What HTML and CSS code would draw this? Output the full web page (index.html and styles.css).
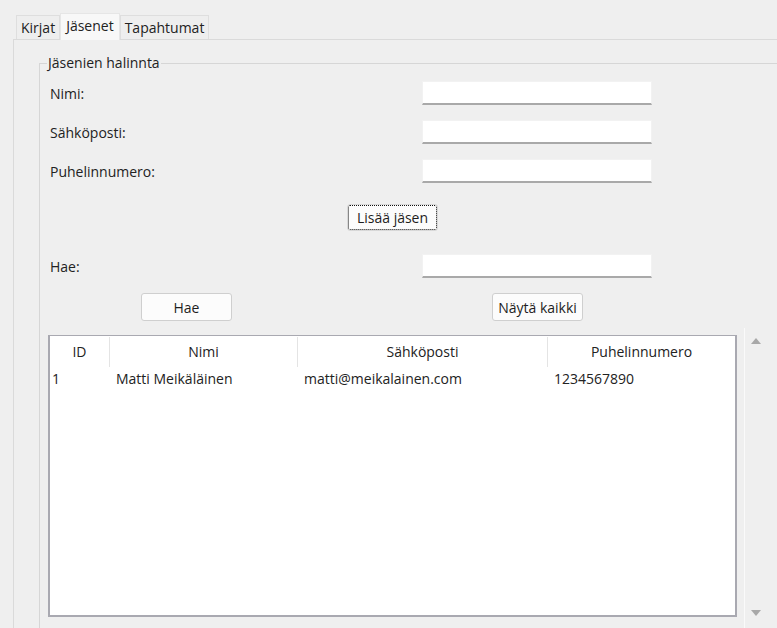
FILE: index.html
```html
<!DOCTYPE html>
<html lang="fi">
<head>
<meta charset="utf-8">
<title>Jäsenet</title>
<link rel="stylesheet" href="styles.css">
</head>
<body>
<div class="tabs">
  <div class="tab">Kirjat</div>
  <div class="tab active">Jäsenet</div>
  <div class="tab">Tapahtumat</div>
</div>
<div class="pane">
  <fieldset class="group">
    <legend>Jäsenien halinnta</legend>
    <div class="form-row"><span class="label">Nimi:</span><div class="input"></div></div>
    <div class="form-row"><span class="label">Sähköposti:</span><div class="input"></div></div>
    <div class="form-row"><span class="label">Puhelinnumero:</span><div class="input"></div></div>
    <div class="add-row"><button class="btn focus">Lisää jäsen</button></div>
    <div class="form-row search"><span class="label">Hae:</span><div class="input"></div></div>
    <div class="btn-row">
      <button class="btn hae">Hae</button>
      <button class="btn all">Näytä kaikki</button>
    </div>
    <div class="table-wrap">
      <div class="table">
        <div class="thead">
          <div class="th">ID</div>
          <div class="th">Nimi</div>
          <div class="th">Sähköposti</div>
          <div class="th last">Puhelinnumero</div>
        </div>
        <div class="tr">
          <div class="td id">1</div>
          <div class="td">Matti Meikäläinen</div>
          <div class="td">matti@meikalainen.com</div>
          <div class="td">1234567890</div>
        </div>
      </div>
      <div class="scrollbar">
        <span class="arrow up"></span>
        <span class="arrow down"></span>
      </div>
    </div>
  </fieldset>
</div>
</body>
</html>
```

FILE: styles.css
```css
html, body {
  margin: 0;
  height: 628px;
  overflow: hidden;
}
body {
  background: #efefef;
  font-family: "Open Sans", "Noto Sans", sans-serif;
  font-size: 14px;
  color: #222222;
}

/* tabs */
.tabs {
  display: flex;
  align-items: flex-end;
  padding: 13px 0 0 16px;
  height: 26px;
}
.tab {
  height: 24px;
  line-height: 24px;
  padding: 0 4px;
  border: 1px solid #dedede;
  border-bottom: none;
  background: #eeeeee;
  box-sizing: border-box;
}
.tab.active {
  height: 27px;
  line-height: 24px;
  padding: 0 5px;
  background: #f8f8f8;
  margin-bottom: -1px;
  position: relative;
  border-color: #e6e6e6;
}

.pane {
  margin-left: 13px;
  border-top: 1px solid #dadada;
  border-left: 1px solid #dadada;
  height: 600px;
}

/* group */
.group {
  margin: 14px 0 0 25px;
  padding: 0 0 0 8px;
  border: 1px solid #d6d6d6;
  border-right: none;
  border-bottom: none;
  min-width: 0;
}
.group legend {
  padding: 0 1px;
  margin-left: -1px;
  line-height: 18px;
}

.form-row {
  display: flex;
  align-items: center;
  height: 24px;
  margin-top: 15px;
}
.form-row:first-of-type {
  margin-top: 9px;
}
.label {
  width: 372px;
  padding-left: 2px;
}
.input {
  width: 230px;
  height: 24px;
  box-sizing: border-box;
  background: #ffffff;
  border: 1px solid #f2f2f2;
  border-bottom: 2px solid #a9a9a9;
}

.add-row {
  margin-top: 22px;
  height: 25px;
  display: flex;
}
.btn {
  font: inherit;
  color: #1e1e1e;
  background: #fcfcfc;
  border: 1px solid #cfcfcf;
  border-radius: 3px;
  box-sizing: border-box;
  padding: 0;
  height: 28px;
  width: 91px;
}
.btn.focus {
  margin-left: 300px;
  width: 89px;
  height: 25px;
  border: 1px dotted #111;
  outline: 1px solid #d8d8d8;
  outline-offset: 0;
  border-radius: 2px;
}
.form-row.search {
  margin-top: 24px;
}
.btn-row {
  display: flex;
  margin-top: 15px;
  height: 28px;
}
.btn.hae {
  margin-left: 93px;
}
.btn.all {
  margin-left: 260px;
}

/* table */
.table-wrap {
  display: flex;
  margin-top: 7px;
  height: 300px;
}
.table {
  margin-top: 7px;
  width: 689px;
  height: 282px;
  box-sizing: border-box;
  background: #ffffff;
  border: 2px solid #a9a9b1;
  border-top: 1px solid #a9a9b1;
}
.thead, .tr {
  display: grid;
  grid-template-columns: 60px 188px 250px 187px;
}
.thead {
  height: 30px;
  padding-top: 1px;
}
.th {
  text-align: center;
  line-height: 29px;
  border-right: 1px solid #e4e4e4;
}
.th.last {
  border-right: none;
}
.tr {
  height: 24px;
  line-height: 24px;
}
.td {
  padding-left: 6px;
  white-space: nowrap;
}
.td.id {
  padding-left: 2px;
}

.scrollbar {
  margin-left: 7px;
  width: 32px;
  border-left: 1px solid #fafafa;
  position: relative;
}
.arrow {
  position: absolute;
  left: 6px;
  width: 0;
  height: 0;
  border-left: 5px solid transparent;
  border-right: 5px solid transparent;
}
.arrow.up {
  top: 10px;
  border-bottom: 6px solid #a8a8a8;
}
.arrow.down {
  top: 282px;
  border-top: 6px solid #a8a8a8;
}
```
